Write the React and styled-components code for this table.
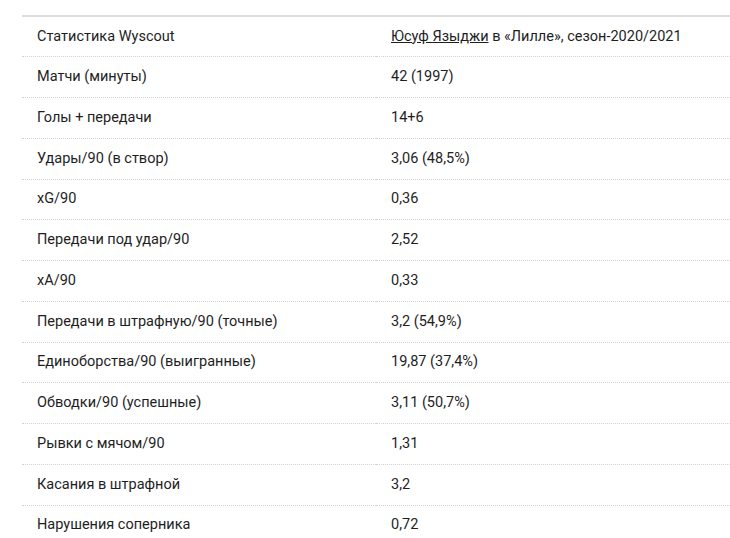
import styled, { createGlobalStyle } from 'styled-components';

const GlobalStyle = createGlobalStyle`
  body {
    margin: 0;
    background: #fff;
    font-family: Roboto, "Liberation Sans", sans-serif;
  }
`;

const rows = [
  ['Матчи (минуты)', '42 (1997)'],
  ['Голы + передачи', '14+6'],
  ['Удары/90 (в створ)', '3,06 (48,5%)'],
  ['xG/90', '0,36'],
  ['Передачи под удар/90', '2,52'],
  ['xA/90', '0,33'],
  ['Передачи в штрафную/90 (точные)', '3,2 (54,9%)'],
  ['Единоборства/90 (выигранные)', '19,87 (37,4%)'],
  ['Обводки/90 (успешные)', '3,11 (50,7%)'],
  ['Рывки с мячом/90', '1,31'],
  ['Касания в штрафной', '3,2'],
  ['Нарушения соперника', '0,72'],
];

const App = () => {
  return (
    <>
      <GlobalStyle />
      <Page>
        <Table>
          <tbody>
            <Row>
              <Cell>Статистика Wyscout</Cell>
              <Cell>
                <PlayerLink href="#">Юсуф Языджи</PlayerLink> в «Лилле», сезон-2020/2021
              </Cell>
            </Row>
            {rows.map(([label, value]) => (
              <Row key={label}>
                <Cell>{label}</Cell>
                <Cell>{value}</Cell>
              </Row>
            ))}
          </tbody>
        </Table>
      </Page>
    </>
  );
};

const Page = styled.div`
  padding: 15px 0 0 22px;
  height: 538px;
  box-sizing: border-box;
  overflow: hidden;
`;

const Table = styled.table`
  width: 708px;
  border-collapse: collapse;
  border-top: 2px solid #dcdcdc;
  table-layout: fixed;
  color: #1e1e1e;
  font-size: 14.5px;
`;

const Row = styled.tr`
  height: 40.75px;
  border-bottom: 1px dotted #d2d2d2;
`;

const Cell = styled.td`
  width: 50%;
  padding: 0 15px;
  vertical-align: middle;
  line-height: 18px;
  white-space: nowrap;
`;

const PlayerLink = styled.a`
  color: #1e1e1e;
  text-decoration: underline;
`;

export default App;
